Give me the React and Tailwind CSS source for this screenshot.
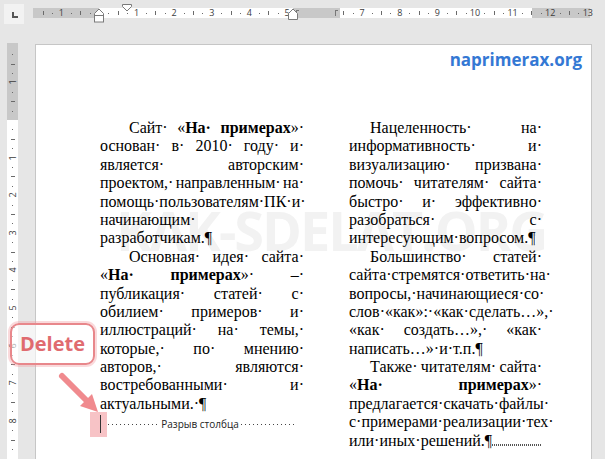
import React from 'react';

const CM = 37.6;

function HRuler() {
  const origin = 66;
  const marks = [];
  for (let q = -8; q <= 56; q++) {
    const x = origin + (q * CM) / 4;
    if (q === 0 || x < 3 || x > 556) continue;
    if (x > 258 && x < 309) continue;
    const m = ((q % 4) + 4) % 4;
    if (m === 0) {
      marks.push(
        <span key={q} className="absolute top-0 -translate-x-1/2 text-[9px] leading-[10px] text-[#3c3c3c]" style={{ left: x }}>
          {Math.abs(q / 4)}
        </span>
      );
    } else if (m === 2) {
      marks.push(<span key={q} className="absolute top-[3px] h-[4px] w-px bg-[#6a6a6a]" style={{ left: x }} />);
    } else {
      marks.push(<span key={q} className="absolute top-[5px] h-px w-px bg-[#6a6a6a]" style={{ left: x }} />);
    }
  }

  return (
    <div className="relative ml-[9px] mt-[8px] flex h-[10px] w-[557px] [font-family:'Open_Sans',sans-serif]">
      <div className="w-[66px] bg-[#c8c8c8]" />
      <div className="w-[194px] bg-white" />
      <div className="w-[47px] bg-[#c8c8c8]" />
      <div className="w-[192px] bg-white" />
      <div className="w-[58px] bg-[#c8c8c8]" />
      {marks}
      {/* column edges */}
      <span className="absolute left-[263px] top-[2px] h-[6px] w-[3px] border-l border-t border-[#777]" />
      <span className="absolute left-[302px] top-[2px] h-[6px] w-[3px] border-l border-t border-[#777]" />
      {/* indent markers */}
      <svg className="absolute left-[61px] top-[-4px] overflow-visible" width="10" height="22" viewBox="0 0 10 22">
        <path d="M0.5 9.5 L5 5 L9.5 9.5 V11.5 H0.5 Z" fill="#fff" stroke="#7a7a7a" />
        <rect x="0.5" y="11.5" width="9" height="6.5" fill="#fff" stroke="#7a7a7a" />
      </svg>
      <svg className="absolute left-[89px] top-[-4px]" width="10" height="9" viewBox="0 0 10 9">
        <path d="M0.5 0.5 H9.5 V2.5 L5 7 L0.5 2.5 Z" fill="#fff" stroke="#7a7a7a" />
      </svg>
      <svg className="absolute left-[255px] top-[-4px] overflow-visible" width="10" height="16" viewBox="0 0 10 16">
        <path d="M0.5 9.5 L5 5 L9.5 9.5 V15.5 H0.5 Z" fill="#fff" stroke="#7a7a7a" />
      </svg>
    </div>
  );
}

function VRuler() {
  const origin = 77;
  const marks = [];
  for (let q = -11; q <= 45; q++) {
    const y = origin + (q * CM) / 4;
    if (q === 0 || y < 3 || y > 414) continue;
    const m = ((q % 4) + 4) % 4;
    if (m === 0) {
      marks.push(
        <span key={q} className="absolute left-0 w-[11px] -translate-y-1/2 -rotate-90 text-center text-[9px] leading-[10px] text-[#3c3c3c]" style={{ top: y }}>
          {Math.abs(q / 4)}
        </span>
      );
    } else if (m === 2) {
      marks.push(<span key={q} className="absolute left-[4px] h-px w-[4px] bg-[#6a6a6a]" style={{ top: y }} />);
    } else {
      marks.push(<span key={q} className="absolute left-[5px] h-px w-px bg-[#6a6a6a]" style={{ top: y }} />);
    }
  }
  return (
    <div className="relative flex h-full w-[11px] flex-col [font-family:'Open_Sans',sans-serif]">
      <div className="h-[77px] shrink-0 bg-[#c8c8c8]" />
      <div className="flex-1 bg-white" />
      {marks}
    </div>
  );
}

// paragraph mark
const P = () => <span className="text-black [font-family:'Liberation_Serif',serif]">¶</span>;

const Line = ({ items, indent = 0 }) => (
  <div className="flex h-[18.4px] justify-between whitespace-nowrap leading-[18.4px]" style={{ paddingLeft: indent }}>
    {items.map((w, i) => (
      <span key={i}>{w}</span>
    ))}
  </div>
);

const Last = ({ children }) => <div className="h-[18.4px] whitespace-nowrap leading-[18.4px]">{children}</div>;

const Brand = () => [
  <>«<b>На·</b></>,
  <><b>примерах</b>»·</>,
];

function LeftColumn() {
  return (
    <div className="w-[204px]">
      <Line indent={29} items={['Сайт·', ...Brand()]} />
      <Line items={['основан·', 'в·', '2010·', 'году·', 'и·']} />
      <Line items={['является·', 'авторским·']} />
      <Line items={['проектом,·', 'направленным·', 'на·']} />
      <Line items={['помощь·', 'пользователям·', 'ПК·', 'и·']} />
      <Last>начинающим·</Last>
      <Last>разработчикам.<P /></Last>
      <Line indent={29} items={['Основная·', 'идея·', 'сайта·']} />
      <Line items={[...Brand(), '–·']} />
      <Line items={['публикация·', 'статей·', 'с·']} />
      <Line items={['обилием·', 'примеров·', 'и·']} />
      <Line items={['иллюстраций·', 'на·', 'темы,·']} />
      <Line items={['которые,·', 'по·', 'мнению·']} />
      <Line items={['авторов,·', 'являются·']} />
      <Line items={['востребованными·', 'и·']} />
      <Last>актуальными.·<P /></Last>
      <div className="flex h-[18.4px] items-center pt-[4px] text-[10px] text-[#222] [font-family:'Open_Sans',sans-serif]">
        <span className="relative z-20 h-[18px] w-px bg-[#333]" />
        <span className="ml-[3px] h-px flex-1 bg-[linear-gradient(to_right,#444_1px,transparent_1px)] bg-[length:4px_1px]" />
        <span className="px-[2px] leading-[12px]">Разрыв столбца</span>
        <span className="mr-[8px] h-px flex-1 bg-[linear-gradient(to_right,#444_1px,transparent_1px)] bg-[length:4px_1px]" />
      </div>
    </div>
  );
}

function RightColumn() {
  return (
    <div className="ml-[45px] w-[193px]">
      <Line indent={21} items={['Нацеленность·', 'на·']} />
      <Line items={['информативность·', 'и·']} />
      <Line items={['визуализацию·', 'призвана·']} />
      <Line items={['помочь·', 'читателям·', 'сайта·']} />
      <Line items={['быстро·', 'и·', 'эффективно·']} />
      <Line items={['разобраться·', 'с·']} />
      <Last>интересующим·вопросом.<P /></Last>
      <Line indent={21} items={['Большинство·', 'статей·']} />
      <Line items={['сайта·', 'стремятся·', 'ответить·', 'на·']} />
      <Line items={['вопросы,·', 'начинающиеся·', 'со·']} />
      <Line items={['слов·', '«как»:·', '«как·', 'сделать…»,·']} />
      <Line items={['«как·', 'создать…»,·', '«как·']} />
      <Last>написать…»·и·т.п.<P /></Last>
      <Line indent={21} items={['Также·', 'читателям·', 'сайта·']} />
      <Line items={Brand()} />
      <Line items={['предлагается·', 'скачать·', 'файлы·']} />
      <Line items={['с·', 'примерами·', 'реализации·', 'тех·']} />
      <div className="flex h-[18.4px] items-end whitespace-nowrap leading-[18.4px]">
        <span>или·иных·решений.<P /></span>
        <span className="mb-[4px] h-[2px] flex-1 bg-[linear-gradient(to_right,#555_1px,transparent_1px)] bg-[length:2px_1px]" />
      </div>
    </div>
  );
}

export default function App() {
  return (
    <div className="relative flex h-[459px] w-[605px] flex-col overflow-hidden bg-[#e6e6e6]">
      <div className="flex h-[44px] shrink-0">
        <div className="relative ml-[4px] mt-[4px] h-[20px] w-[20px] bg-[#f2f2f2]">
          <span className="absolute left-[8px] top-[8px] h-[6px] w-[2px] bg-[#555]" />
          <span className="absolute left-[8px] top-[12px] h-[2px] w-[6px] bg-[#555]" />
        </div>
        <HRuler />
      </div>

      <div className="flex min-h-0 flex-1">
        <div className="-mt-[1px] w-[35px] shrink-0 pl-[7px]">
          <VRuler />
        </div>

        <div className="relative w-[557px] border-x border-t border-[#c6c6c6] bg-white">
          <div aria-hidden className="pointer-events-none absolute left-[80px] top-[158px] select-none whitespace-nowrap text-[54px] font-bold leading-none tracking-[-2px] text-[#f2f2f2] [font-family:'Open_Sans',sans-serif]">
            KAK-SDELAT.ORG
          </div>

          <div className="relative flex justify-end pr-[9px] pt-[3px]">
            <span className="text-[17px] font-bold leading-[23px] text-[#3478d4] [font-family:'Open_Sans',sans-serif]">naprimerax.org</span>
          </div>

          <div className="relative mt-[48px] flex pl-[64px] text-[16px] text-black [font-family:'Liberation_Serif','Times_New_Roman',serif]">
            <LeftColumn />
            <RightColumn />
          </div>
        </div>
      </div>

      {/* callout */}
      <div className="absolute left-[90px] top-[412px] z-10 h-[25px] w-[17px] bg-[#f7c3c6]" />
      <div className="absolute left-[10px] top-[323px] z-30 flex h-[42px] w-[85px] items-center justify-center rounded-[9px] border-2 border-[#e8878b] bg-white/60 shadow-[0_0_0_2px_rgba(240,150,154,0.35)]">
        <span className="text-[20px] font-bold leading-none text-[#e06b6f] [font-family:'Open_Sans',sans-serif]">Delete</span>
      </div>
      <svg className="absolute left-0 top-0 z-30" width="605" height="459" viewBox="0 0 605 459" fill="none">
        <line x1="62" y1="376" x2="87" y2="401" stroke="#f08a8e" strokeWidth="6" strokeLinecap="round" />
        <polygon points="98,412 80,406 92,394" fill="#f08a8e" />
      </svg>
    </div>
  );
}
